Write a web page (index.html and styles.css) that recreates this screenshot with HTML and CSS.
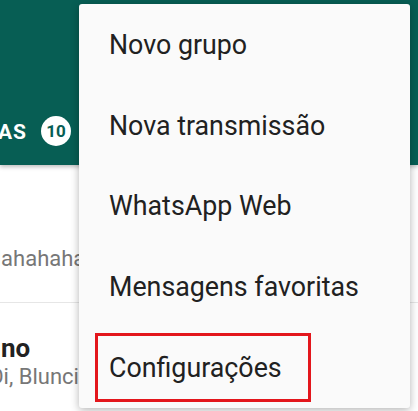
FILE: index.html
```html
<!DOCTYPE html>
<html lang="pt-BR">
<head>
    <meta charset="UTF-8">
    <meta name="viewport" content="width=device-width, initial-scale=1.0">
    <title>WhatsApp</title>
    <link rel="stylesheet" href="styles.css">
</head>
<body>
    <div class="screen">
        <header class="appbar">
            <div class="tabs">
                <span class="tab-label">CONVERSAS</span>
                <span class="badge">10</span>
            </div>
        </header>

        <ul class="chat-list">
            <li class="chat">
                <div class="chat-text">
                    <span class="chat-name">Turma</span>
                    <span class="chat-msg">Henrique: Hahahahahah kkk</span>
                </div>
            </li>
            <li class="chat">
                <div class="chat-text">
                    <span class="chat-name">Mário Bruno</span>
                    <span class="chat-msg">Fernanda: Oi, Bluncinho, tudo bem?</span>
                </div>
            </li>
        </ul>

        <!-- overflow menu opened from the toolbar -->
        <ul class="menu">
            <li class="menu-item">Novo grupo</li>
            <li class="menu-item">Nova transmissão</li>
            <li class="menu-item">WhatsApp Web</li>
            <li class="menu-item">Mensagens favoritas</li>
            <li class="menu-item"><span class="highlight">Configurações</span></li>
        </ul>
    </div>
</body>
</html>
```

FILE: styles.css
```css
body {
    margin: 0;
    padding: 0;
    font-family: Roboto, "Liberation Sans", Arial, sans-serif;
    background-color: #fff;
}

.screen {
    position: relative;
    width: 418px;
    height: 411px;
    overflow: hidden;
    background-color: #fff;
}

.appbar {
    height: 165px;
    background-color: #075e54;
    display: flex;
    flex-direction: column;
    justify-content: flex-end;
    box-shadow: 0 2px 4px rgba(0, 0, 0, 0.25);
    position: relative;
    z-index: 1;
}

.tabs {
    width: 71px;
    height: 66px;
    display: flex;
    align-items: center;
    justify-content: flex-end;
    gap: 14px;
    overflow: hidden;
}

.tab-label {
    color: #fff;
    font-size: 21px;
    font-weight: bold;
    letter-spacing: 1px;
    white-space: nowrap;
    flex-shrink: 0;
}

.badge {
    flex-shrink: 0;
    width: 30px;
    height: 30px;
    border-radius: 50%;
    background-color: #fff;
    color: #075e54;
    font-size: 17px;
    font-weight: bold;
    display: flex;
    align-items: center;
    justify-content: center;
    margin-top: -2px;
}

.chat-list {
    list-style: none;
    margin: 0;
    padding: 20px 0 0 0;
}

.chat {
    height: 118px;
    box-sizing: border-box;
    display: flex;
    flex-direction: column;
    justify-content: center;
    border-bottom: 1px solid #e6e6e6;
}

.chat-text {
    display: flex;
    flex-direction: column;
    margin-left: -114px;
    white-space: nowrap;
}

.chat-name {
    font-size: 26px;
    font-weight: bold;
    line-height: 30px;
    color: #222;
}

.chat-msg {
    font-size: 22px;
    line-height: 28px;
    color: #777;
}

.menu {
    position: absolute;
    left: 79px;
    top: 4px;
    width: 331px;
    height: 404px;
    margin: 0;
    padding: 1px 0 0 0;
    box-sizing: border-box;
    list-style: none;
    background-color: #fafafa;
    border-radius: 3px;
    box-shadow: 0 2px 8px rgba(0, 0, 0, 0.3);
    z-index: 2;
}

.menu-item {
    height: 80.6px;
    display: flex;
    align-items: center;
    padding-left: 30px;
    font-size: 26.8px;
    color: #212121;
}

.highlight {
    display: flex;
    align-items: center;
    box-sizing: border-box;
    width: 216px;
    height: 69px;
    margin-left: -14px;
    padding-left: 11px;
    border: 3px solid #e3161c;
}
```
